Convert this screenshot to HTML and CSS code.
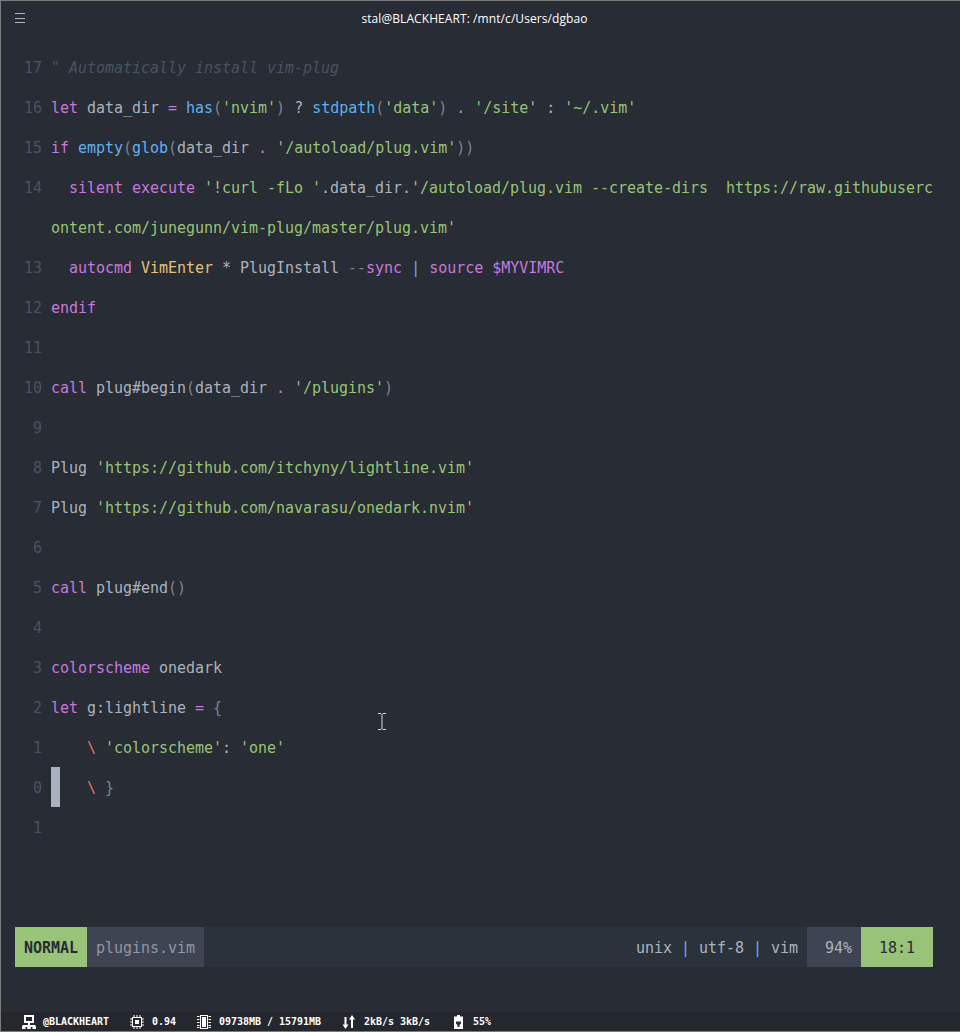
FILE: index.html
```html
<!DOCTYPE html>
<html lang="en">
<head>
<meta charset="utf-8">
<title>stal@BLACKHEART: /mnt/c/Users/dgbao</title>
<link rel="stylesheet" href="styles.css">
</head>
<body>
<div class="window">
  <header class="titlebar">
    <svg class="menu" width="10" height="10" viewBox="0 0 10 10"><path d="M0 .5h10M0 5.500h10M0 9.500h10" stroke="#b4b6ba" fill="none"/></svg>
    <div class="title">stal@BLACKHEART: /mnt/c/Users/dgbao</div>
  </header>
  <main class="editor">
    <div class="row"><span class="num">17</span><span class="code com">" Automatically install vim-plug</span></div>
    <div class="row"><span class="num">16</span><span class="code"><i class="k">let</i> data_dir <i class="k">=</i> <i class="f">has</i><i class="p">(</i><i class="s">'nvim'</i><i class="p">)</i> ? <i class="f">stdpath</i><i class="p">(</i><i class="s">'data'</i><i class="p">)</i> <i class="k">.</i> <i class="s">'/site'</i> : <i class="s">'~/.vim'</i></span></div>
    <div class="row"><span class="num">15</span><span class="code"><i class="k">if</i> <i class="f">empty</i><i class="p">(</i><i class="f">glob</i><i class="p">(</i>data_dir <i class="k">.</i> <i class="s">'/autoload/plug.vim'</i><i class="p">))</i></span></div>
    <div class="row"><span class="num">14</span><span class="code">  <i class="k">silent execute</i> <i class="s">'!curl -fLo '</i>.data_dir.<i class="s">'/autoload/plug.vim --create-dirs  https://raw.githubusercontent.com/junegunn/vim-plug/master/plug.vim'</i></span></div>
    <div class="row"><span class="num">13</span><span class="code">  <i class="k">autocmd</i> <i class="y">VimEnter</i> * PlugInstall <i class="p">--</i><i class="k">sync</i> <i class="f">|</i> <i class="k">source $MYVIMRC</i></span></div>
    <div class="row"><span class="num">12</span><span class="code"><i class="k">endif</i></span></div>
    <div class="row"><span class="num">11</span><span class="code"></span></div>
    <div class="row"><span class="num">10</span><span class="code"><i class="k">call</i> plug#begin<i class="p">(</i>data_dir <i class="k">.</i> <i class="s">'/plugins'</i><i class="p">)</i></span></div>
    <div class="row"><span class="num">9</span><span class="code"></span></div>
    <div class="row"><span class="num">8</span><span class="code">Plug <i class="s">'https://github.com/itchyny/lightline.vim'</i></span></div>
    <div class="row"><span class="num">7</span><span class="code">Plug <i class="s">'https://github.com/navarasu/onedark.nvim'</i></span></div>
    <div class="row"><span class="num">6</span><span class="code"></span></div>
    <div class="row"><span class="num">5</span><span class="code"><i class="k">call</i> plug#end<i class="p">()</i></span></div>
    <div class="row"><span class="num">4</span><span class="code"></span></div>
    <div class="row"><span class="num">3</span><span class="code"><i class="k">colorscheme</i> onedark</span></div>
    <div class="row"><span class="num">2</span><span class="code"><i class="k">let</i> g:lightline <i class="k">=</i> <i class="p">{</i></span></div>
    <div class="row"><span class="num">1</span><span class="code">    <i class="r">\</i> <i class="s">'colorscheme'</i>: <i class="s">'one'</i></span></div>
    <div class="row"><span class="num">0</span><span class="code"><b class="cursor"> </b>   <i class="r">\</i> <i class="p">}</i></span></div>
    <div class="row"><span class="num">1</span><span class="code"></span></div>
    <svg class="ibeam" width="8" height="17" viewBox="0 0 8 17"><path d="M0 .5h3l1 1 1-1h3M4 1.500v14M0 16.500h3l1-1 1 1h3" stroke="#d8d8d8" fill="none"/></svg>
  </main>
  <section class="status">
    <span class="seg mode">NORMAL</span>
    <span class="seg file">plugins.vim</span>
    <span class="fill"></span>
    <span class="seg info">unix <i class="bar">|</i> utf-8 <i class="bar">|</i> vim</span>
    <span class="seg pct">94%</span>
    <span class="seg pos">18:1</span>
  </section>
  <footer class="tray">
    <span class="item host">
      <svg width="14" height="14" viewBox="0 0 14 14"><path d="M3 1h8v6H3zM1.500 14v-3h11v3M7 7v4" fill="none" stroke="#fff" stroke-width="2"/><path d="M0 11.500h3.500V14H0zM5.200 11.500h3.600V14H5.200zM10.500 11.500H14V14h-3.500z" fill="#fff"/></svg>
      <span>@BLACKHEART</span>
    </span>
    <span class="item load">
      <svg width="14" height="14" viewBox="0 0 14 14"><rect x="2.500" y="2.500" width="9" height="9" fill="none" stroke="#fff"/><rect x="5" y="5" width="4" height="4" fill="#fff"/><path d="M4 0v2M7 0v2M10 0v2M4 12v2M7 12v2M10 12v2M0 4h2M0 7h2M0 10h2M12 4h2M12 7h2M12 10h2" stroke="#fff"/></svg>
      <span>0.94</span>
    </span>
    <span class="item mem">
      <svg width="14" height="14" viewBox="0 0 14 14"><rect x="3.500" y=".5" width="7" height="13" fill="none" stroke="#fff"/><rect x="5" y="2" width="4" height="10" fill="#fff"/><path d="M0 1.500h2.500M0 4.500h2.500M0 7.500h2.500M0 10.500h2.500M0 12.500h2.500M11.500 1.500H14M11.500 4.500H14M11.500 7.500H14M11.500 10.500H14M11.500 12.500H14" stroke="#fff"/></svg>
      <span>09738MB / 15791MB</span>
    </span>
    <span class="item net">
      <svg width="14" height="14" viewBox="0 0 14 14"><path d="M3.500 2v9M10 3v10" stroke="#fff" stroke-width="2" fill="none"/><path d="M.5 9.500h6L3.500 14zM7 4.500h6L10 0z" fill="#fff"/></svg>
      <span>2kB/s 3kB/s</span>
    </span>
    <span class="item batt">
      <svg width="9" height="14" viewBox="0 0 9 14"><path d="M3 0h3v1.500h3V14H0V1.500h3z" fill="#fff"/><path d="M3 4v3M6 4v3M2 6.500h5v2l-1.500 1.500v2h-2v-2L2 8.500z" fill="#282c34"/></svg>
      <span>55%</span>
    </span>
  </footer>
</div>
</body>
</html>
```
FILE: styles.css
```css
* { box-sizing: border-box; }
html, body { margin: 0; height: 100%; background: #282c34; }
.window {
  position: relative;
  height: 1032px;
  display: flex;
  flex-direction: column;
  background: #282c34;
  border-top: 1px solid #7a7a7a;
  border-left: 1px solid #7a7a7a;
  border-bottom: 1px solid #7a7a7a;
  font-family: "DejaVu Sans Mono", monospace;
  font-size: 15px;
  letter-spacing: -0.03px;
  line-height: 40px;
  color: #abb2bf;
}
.titlebar {
  height: 47px;
  flex: none;
  display: flex;
  align-items: flex-start;
  padding: 12px 36px 0 14px;
}
.menu { flex: none; }
.title {
  flex: 1;
  margin-top: -2px;
  text-align: center;
  font: 12px/16px "Open Sans", sans-serif;
  letter-spacing: 0.08px;
  color: #fff;
}
.editor { flex: 1; }
.row { display: flex; }
.num {
  flex: none;
  width: 41px;
  text-align: right;
  color: #4b5263;
}
.code {
  flex: none;
  width: 886px;
  margin-left: 9px;
  white-space: pre-wrap;
  word-break: break-all;
  min-height: 40px;
}
.code i { font-style: normal; }
.com { font-style: italic; color: #4b5263; }
.k { color: #c678dd; }
.f { color: #61afef; }
.s { color: #98c379; }
.p { color: #7c8492; }
.y { color: #e5c07b; }
.r { color: #e06c75; }
.cursor {
  display: inline-block;
  width: 9px;
  height: 40px;
  margin-top: -1px;
  vertical-align: top;
  background: #abb2bf;
  font-weight: normal;
}
.ibeam { position: absolute; left: 377px; top: 712px; }
.status {
  flex: none;
  height: 40px;
  margin: 0 27px 45px 14px;
  display: flex;
  background: #2c323c;
}
.seg { padding: 1px 9px 0; }
.fill { flex: 1; }
.mode { background: #98c379; color: #282c34; font-weight: bold; }
.file { background: #3e4452; color: #8e96a6; }
.info { color: #abb2bf; }
.bar { font-style: normal; color: #61afef; }
.pct { background: #3e4452; padding-left: 18px; }
.pos { background: #98c379; color: #282c34; padding: 1px 18px 0; }
.tray {
  flex: none;
  height: 19px;
  display: flex;
  align-items: center;
  background: #24272e;
  padding-left: 21px;
  font-size: 10px;
  font-weight: bold;
  letter-spacing: -0.02px;
  line-height: 14px;
  color: #fff;
}
.item { display: flex; align-items: center; gap: 8px; }
.host { width: 108px; gap: 7px; }
.load { width: 67px; }
.mem { width: 145px; }
.net { width: 112px; }
.batt { gap: 10px; }
```
